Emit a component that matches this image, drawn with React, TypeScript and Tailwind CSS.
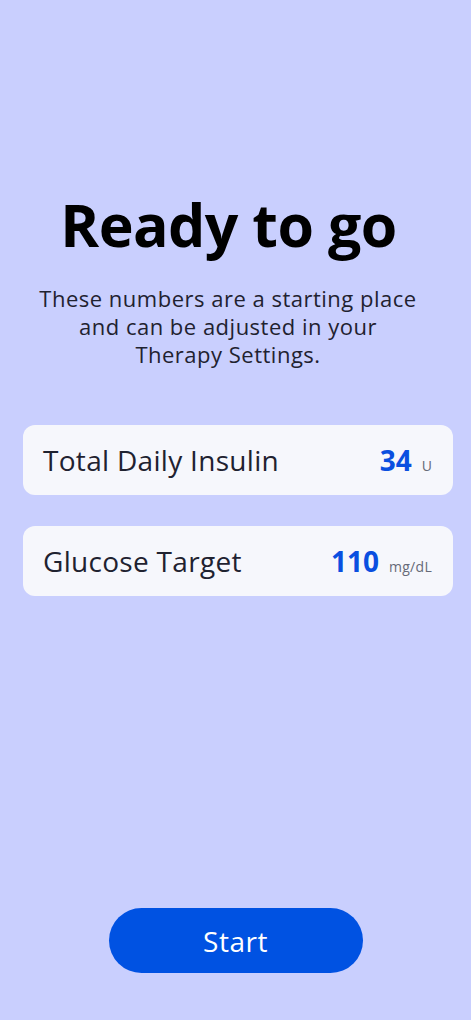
export default function App() {
  return (
    <div
      className="w-[471px] h-[1020px] bg-[#c9cffe] flex flex-col items-center"
      style={{ fontFamily: '"Open Sans", "Lato", sans-serif' }}
    >
      <h1 className="mt-[188px] pr-[14px] text-[59px] leading-[72px] font-bold text-black tracking-[-0.6px]">Ready to go</h1>
      <p className="mt-[24px] pr-[15px] text-center text-[22px] leading-[28px] tracking-[0.5px] text-[#1f2230]">
        These numbers are a starting place
        <br />
        and can be adjusted in your
        <br />
        Therapy Settings.
      </p>
      <div className="mt-[57px] self-start ml-[23px] w-[430px] flex flex-col gap-[31px]">
        <div className="h-[70px] rounded-[12px] bg-[#f6f7fc] flex items-center justify-between pl-[20px] pr-[21px]">
          <span className="text-[28px] tracking-[0.3px] text-[#1f2230]">Total Daily Insulin</span>
          <span className="flex items-baseline gap-[10px]">
            <span className="text-[28px] font-bold text-[#0a4fe0]">34</span>
            <span className="text-[14px] text-[#666a78]">U</span>
          </span>
        </div>
        <div className="h-[70px] rounded-[12px] bg-[#f6f7fc] flex items-center justify-between pl-[20px] pr-[21px]">
          <span className="text-[28px] tracking-[0.3px] text-[#1f2230]">Glucose Target</span>
          <span className="flex items-baseline gap-[10px]">
            <span className="text-[28px] font-bold text-[#0a4fe0]">110</span>
            <span className="text-[14px] tracking-[0.3px] text-[#666a78]">mg/dL</span>
          </span>
        </div>
      </div>
      <div className="flex-1" />
      <button className="mb-[47px] w-[254px] h-[65px] rounded-full bg-[#0052e2] text-white text-[28px] tracking-[0.5px]">Start</button>
    </div>
  );
}
